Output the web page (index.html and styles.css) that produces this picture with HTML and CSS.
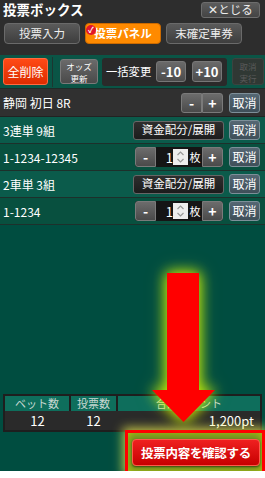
FILE: index.html
```html
<!DOCTYPE html>
<html lang="ja">
<head>
    <meta charset="UTF-8">
    <meta name="viewport" content="width=device-width, initial-scale=1.0">
    <title>投票ボックス</title>
    <link rel="stylesheet" href="styles.css">
</head>
<body>
    <div class="box">
        <div class="head">
            <h1>投票ボックス</h1>
            <button class="close">✕とじる</button>
        </div>

        <div class="tabs">
            <button class="tab">投票入力</button>
            <button class="tab active"><span class="check">✓</span>投票パネル</button>
            <button class="tab">末確定車券</button>
        </div>

        <div class="tools">
            <button class="clear">全削除</button>
            <span class="sep"></span>
            <button class="odds"><span>オッズ</span><span>更新</span></button>
            <div class="bulk">
                <span class="bulk-label">一括変更</span>
                <button class="step">-10</button>
                <button class="step">+10</button>
            </div>
            <button class="undo" disabled><span>取消</span><span>実行</span></button>
        </div>

        <div class="row race">
            <span class="label">静岡 初日 8R</span>
            <div class="pm">
                <button>-</button><button>+</button>
            </div>
            <button class="cancel">取消</button>
        </div>

        <div class="row group">
            <span class="label">3連単 9組</span>
            <button class="alloc">資金配分/展開</button>
            <button class="cancel">取消</button>
        </div>
        <div class="row bet">
            <span class="label">1-1234-12345</span>
            <div class="qty">
                <button>-</button>
                <span class="num">1</span>
                <span class="spin">
                    <svg width="9" height="14" viewBox="0 0 9 14"><path d="M1.5 5 L4.5 2 L7.5 5 M1.5 9 L4.5 12 L7.5 9" fill="none" stroke="#9a9a9a" stroke-width="1.2"/></svg>
                </span>
                <span class="unit">枚</span>
                <button>+</button>
            </div>
            <button class="cancel">取消</button>
        </div>

        <div class="row group">
            <span class="label">2車単 3組</span>
            <button class="alloc">資金配分/展開</button>
            <button class="cancel">取消</button>
        </div>
        <div class="row bet">
            <span class="label">1-1234</span>
            <div class="qty">
                <button>-</button>
                <span class="num">1</span>
                <span class="spin">
                    <svg width="9" height="14" viewBox="0 0 9 14"><path d="M1.5 5 L4.5 2 L7.5 5 M1.5 9 L4.5 12 L7.5 9" fill="none" stroke="#9a9a9a" stroke-width="1.2"/></svg>
                </span>
                <span class="unit">枚</span>
                <button>+</button>
            </div>
            <button class="cancel">取消</button>
        </div>

        <div class="fill"></div>

        <table class="summary">
            <tr>
                <th class="c1">ベット数</th>
                <th class="c2">投票数</th>
                <th>合計ポイント</th>
            </tr>
            <tr>
                <td class="c1">12</td>
                <td class="c2">12</td>
                <td class="pt">1,200pt</td>
            </tr>
        </table>

        <div class="foot">
            <div class="mark">
                <button class="confirm">投票内容を確認する</button>
            </div>
        </div>

        <svg class="arrow" width="63" height="149" viewBox="0 0 63 149">
            <polygon points="15,0 47,0 47,117 63,117 31.5,149 0,117 15,117" fill="#ff0000"/>
        </svg>
    </div>
</body>
</html>
```

FILE: styles.css
```css
*{
    margin: 0;
    padding: 0;
    box-sizing: border-box;
}
body{
    background-color: #fff;
    font-family: "Noto Sans CJK JP", "Noto Sans", sans-serif;
    color: #fff;
}
button{
    font-family: inherit;
    color: #fff;
    cursor: pointer;
}
.box{
    position: relative;
    width: 265px;
    height: 471px;
    display: flex;
    flex-direction: column;
    background-color: #004d40;
}

/* header */
.head{
    height: 20px;
    flex-shrink: 0;
    display: flex;
    align-items: center;
    justify-content: space-between;
    padding: 0 5px 0 3px;
    background-color: #2d2d2d;
}
.head h1{
    font-size: 13.5px;
    font-weight: bold;
    line-height: 1;
}
.close{
    height: 16px;
    width: 59px;
    font-size: 11.5px;
    line-height: 1;
    color: #eee;
    background: linear-gradient(#5c5c5c, #444);
    border: 1px solid #6d6d6d;
    border-radius: 3px;
}

/* tabs */
.tabs{
    height: 35px;
    flex-shrink: 0;
    display: flex;
    gap: 5px;
    padding: 3px 4px 0;
    background-color: #2d2d2d;
}
.tab{
    position: relative;
    width: 76px;
    height: 21px;
    font-size: 11.5px;
    line-height: 1;
    color: #eee;
    background: linear-gradient(#5a5a5a, #3e3e3e);
    border: 1px solid #6a6a6a;
    border-radius: 4px;
}
.tab.active{
    background: #ff8a00;
    border-color: #cc6a00;
    font-weight: bold;
    color: #fff;
}
.check{
    position: absolute;
    left: 0;
    top: 1px;
    width: 10px;
    height: 10px;
    border-radius: 50%;
    background-color: #e0162b;
    font-size: 8px;
    line-height: 10px;
    font-weight: bold;
    color: #fff;
}

/* tools */
.tools{
    height: 34px;
    flex-shrink: 0;
    display: flex;
    align-items: center;
    padding: 0 3px;
    gap: 4px;
    background-color: #0a5546;
    border-bottom: 1px solid #1e2b28;
}
.clear{
    width: 45px;
    height: 27px;
    flex-shrink: 0;
    font-size: 12px;
    background: linear-gradient(#ff4a16, #dd2c00);
    border: 1px solid #ff6a40;
    border-radius: 3px;
}
.sep{
    width: 1px;
    height: 30px;
    flex-shrink: 0;
    background-color: #1c3631;
    margin-right: 3px;
}
.odds, .undo{
    display: flex;
    flex-direction: column;
    align-items: center;
    justify-content: center;
    font-size: 8.5px;
    line-height: 12px;
    border-radius: 3px;
}
.odds span, .undo span{
    display: block;
    height: 12px;
    white-space: nowrap;
}
.odds{
    width: 38px;
    height: 25px;
    flex-shrink: 0;
    background: linear-gradient(#6a6a6a, #4a4a4a);
    border: 1px solid #7a7a7a;
}
.bulk{
    width: 125px;
    height: 28px;
    flex-shrink: 0;
    display: flex;
    align-items: center;
    padding: 0 4px;
    background-color: #2a2a2a;
    border-radius: 3px;
}
.bulk-label{
    width: 45px;
    margin-right: 5px;
    white-space: nowrap;
    font-size: 11.3px;
    line-height: 1;
}
.step{
    width: 30px;
    height: 21px;
    font-size: 13px;
    font-weight: bold;
    line-height: 1;
    background: linear-gradient(#6a6a6a, #4c4c4c);
    border: 1px solid #777;
    border-radius: 3px;
}
.step + .step{
    margin-left: 6px;
}
.undo{
    width: 32px;
    height: 27px;
    flex-shrink: 0;
    margin-left: 1px;
    color: #5a5a5a;
    background-color: #303834;
    border: 1px solid #3a4440;
}

/* rows */
.row{
    height: 27px;
    flex-shrink: 0;
    display: flex;
    align-items: center;
    padding: 0 5px 0 3px;
    border-bottom: 1px solid #1d302b;
    font-size: 12px;
}
.row .label{
    flex: 1;
}
.race{
    height: 28px;
    background-color: #303030;
    border-bottom-color: #222;
}
.group{
    background-color: #0b5b4b;
}
.bet{
    background-color: #08503f;
}
.pm{
    display: flex;
    margin-right: 6px;
}
.pm button, .qty button{
    width: 21px;
    height: 20px;
    font-size: 14px;
    font-weight: bold;
    line-height: 1;
    background: linear-gradient(#6c6c6c, #4a4a4a);
    border: 1px solid #7a7a7a;
}
.pm button:first-child, .qty button:first-child{
    border-radius: 3px 0 0 3px;
}
.pm button:last-child, .qty button:last-child{
    border-radius: 0 3px 3px 0;
}
.cancel{
    width: 31px;
    height: 20px;
    font-size: 12px;
    line-height: 1;
    background: linear-gradient(#556773, #3f4f59);
    border: 1px solid #7d8f99;
    border-radius: 3px;
}
.alloc{
    width: 91px;
    height: 19px;
    margin-right: 5px;
    font-size: 11.5px;
    line-height: 1;
    background: linear-gradient(#2e2e2e, #1c1c1c);
    border: 1px solid #666;
    border-radius: 3px;
}
.qty{
    display: flex;
    align-items: center;
    height: 20px;
    margin-right: 6px;
    background-color: #151515;
    border-radius: 3px;
}
.num{
    width: 17px;
    text-align: right;
    font-size: 13px;
    line-height: 1;
}
.spin{
    width: 15px;
    height: 16px;
    display: flex;
    align-items: center;
    justify-content: center;
    background-color: #eee;
}
.spin svg{
    display: block;
}
.unit{
    width: 14px;
    text-align: center;
    font-size: 11px;
    line-height: 1;
}

.fill{
    flex: 1;
}

/* summary */
.summary{
    width: 259px;
    flex-shrink: 0;
    margin: 0 3px;
    border-collapse: collapse;
    border: 2px solid #1e1e1e;
    font-size: 12px;
}
.summary th{
    height: 16px;
    font-weight: normal;
    font-size: 11px;
    color: #c8d8d2;
    background-color: #0e6e5c;
    border-right: 2px solid #1e1e1e;
    line-height: 1;
}
.summary td{
    height: 20px;
    background-color: #2a2a2a;
    text-align: center;
    font-size: 13px;
    line-height: 1;
}
.summary .c1{
    width: 66px;
}
.summary .c2{
    width: 47px;
}
.summary td.pt{
    text-align: right;
    padding-right: 6px;
}

/* confirm */
.foot{
    height: 39px;
    flex-shrink: 0;
    display: flex;
    justify-content: flex-end;
    align-items: flex-start;
}
.mark{
    margin-top: -2px;
    width: 140px;
    height: 44px;
    display: flex;
    align-items: center;
    justify-content: center;
    background-color: #6b8d22;
    border: 3px solid #ff0000;
    box-shadow: 0 0 10px 2px rgba(255, 255, 80, 0.75), inset 0 0 8px rgba(255, 255, 0, 0.5);
}
.confirm{
    width: 128px;
    height: 27px;
    margin-left: 2px;
    font-size: 12.5px;
    font-weight: bold;
    letter-spacing: -0.3px;
    background: linear-gradient(#ef2020, #c80000);
    border: 1px solid #ff5a4a;
    border-radius: 4px;
    box-shadow: 0 1px 2px rgba(0, 0, 0, 0.5);
}

.arrow{
    position: absolute;
    left: 152px;
    top: 273px;
    filter: drop-shadow(0 0 7px rgba(220, 255, 0, 0.75)) drop-shadow(0 0 7px rgba(220, 255, 0, 0.55));
}
```
